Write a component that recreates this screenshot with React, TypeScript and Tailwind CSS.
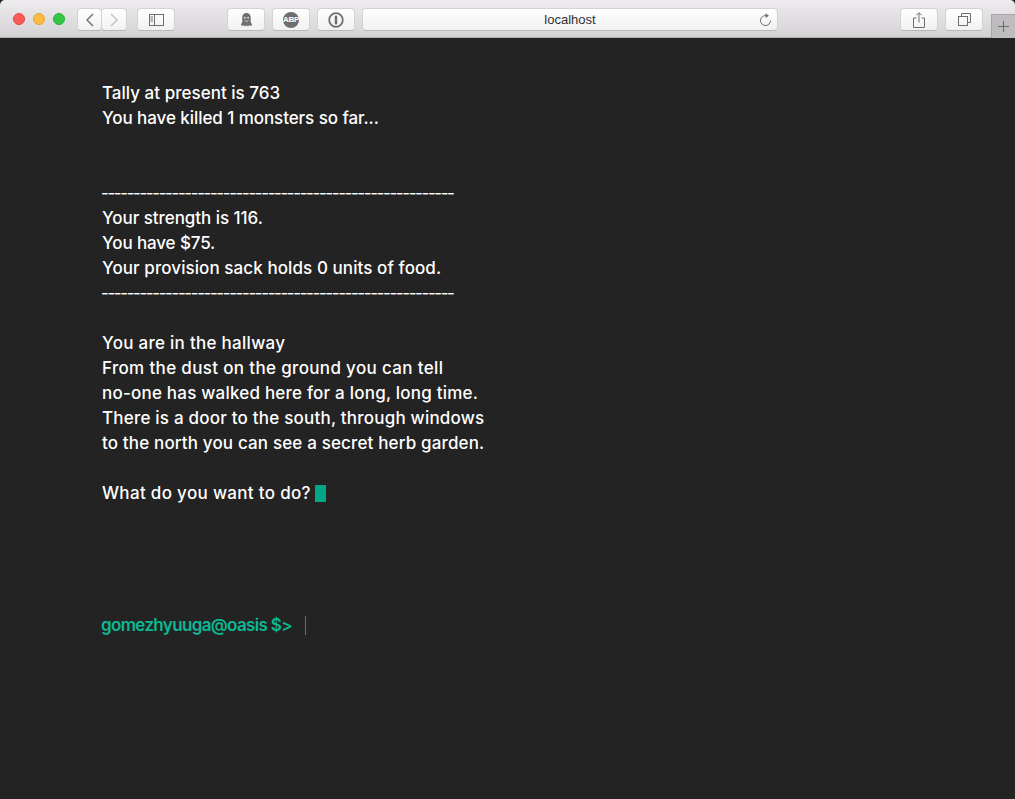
import React from "react";

const Btn = ({ w, children, className = "" }: { w: string; children?: React.ReactNode; className?: string }) => (
  <div className={`${w} h-[23px] flex items-center justify-center rounded-[4px] bg-gradient-to-b from-white to-[#f2f1f2] border border-[#d4d2d4] border-b-[#b9b7b9] ${className}`}>
    {children}
  </div>
);

const Line = ({ children, className = "" }: { children?: React.ReactNode; className?: string }) => (
  <div className={`h-[25px] leading-[25px] whitespace-pre ${className}`}>{children}</div>
);
const dashes = "-".repeat(55);

export default function App() {
  return (
    <div className="w-[1015px] h-[799px] flex flex-col bg-[#232323] overflow-hidden font-['Inter','Liberation_Sans',sans-serif]">
      <header className="h-[38px] shrink-0 flex items-start pt-[8px] bg-gradient-to-b from-[#eeecee] to-[#d4d2d4] border-b border-[#b1afb1] rounded-t-[5px] relative">
        <div className="flex items-center gap-[8px] ml-[13px] mt-[5px]">
          <div className="w-[12px] h-[12px] rounded-full bg-[#fc5b57] border border-[#e5453f]" />
          <div className="w-[12px] h-[12px] rounded-full bg-[#fdbc40] border border-[#e4a32e]" />
          <div className="w-[12px] h-[12px] rounded-full bg-[#33c748] border border-[#27ae3a]" />
        </div>
        <div className="flex ml-[12px]">
          <Btn w="w-[25px]">
            <svg width="10" height="14" viewBox="0 0 10 14" fill="none" stroke="#6e6e6e" strokeWidth="1.4"><path d="M8 1 2 7l6 6" /></svg>
          </Btn>
          <Btn w="w-[26px]" className="-ml-px">
            <svg width="10" height="14" viewBox="0 0 10 14" fill="none" stroke="#c2c2c2" strokeWidth="1.4"><path d="m2 1 6 6-6 6" /></svg>
          </Btn>
        </div>
        <Btn w="w-[38px]" className="ml-[10px]">
          <svg width="15" height="12" viewBox="0 0 15 12" fill="none" stroke="#6e6e6e"><rect x=".5" y=".5" width="14" height="11" /><path d="M5.500 .5v11M1.500 3h2.500M1.500 5h2.500M1.500 7h2.500" /></svg>
        </Btn>
        <Btn w="w-[38px]" className="ml-[52px]">
          <svg width="13" height="14" viewBox="0 0 12 15" fill="#6e6e6e"><path d="M6 0C2.800 0 1.500 2.400 1.500 5v4.500L0 12.500l1.500 1.500L3 13.200 4.500 14.500 6 13.200l1.500 1.300L9 13.200l1.500.8 1.500-1.500-1.500-3V5C10.500 2.400 9.200 0 6 0z" /><circle cx="4.300" cy="5" r=".9" fill="#f5f5f5" /><circle cx="7.700" cy="5" r=".9" fill="#f5f5f5" /><path d="M4 8c1 1 3 1 4 0" stroke="#f5f5f5" fill="none" strokeWidth=".8" /></svg>
        </Btn>
        <Btn w="w-[38px]" className="ml-[7px]">
          <div className="w-[16px] h-[16px] rounded-full bg-[#6e6e6e] flex items-center justify-center text-[8px] tracking-[-0.3px] font-bold text-white font-['Liberation_Sans',sans-serif]">ABP</div>
        </Btn>
        <Btn w="w-[38px]" className="ml-[7px]">
          <svg width="16" height="16" viewBox="0 0 16 16" fill="none"><circle cx="8" cy="8" r="6.800" stroke="#6e6e6e" strokeWidth="1.800" /><rect x="6.800" y="3.500" width="2.400" height="9" rx="1" fill="#6e6e6e" /></svg>
        </Btn>
        <Btn w="w-[416px]" className="ml-[7px] relative text-[13px] text-[#303030] font-['Liberation_Sans',sans-serif]">
          <span>localhost</span>
          <svg className="absolute right-[5px] top-[4px]" width="13" height="14" viewBox="0 0 13 14" fill="none" stroke="#6e6e6e"><path d="M7.500 2.600A5 5 0 1 0 11.500 7.500" /><path d="M6.500 .3 10 2.700 6.500 5z" fill="#6e6e6e" stroke="none" /></svg>
        </Btn>
        <Btn w="w-[38px]" className="ml-[122px]">
          <svg width="12" height="16" viewBox="0 0 12 16" fill="none" stroke="#6e6e6e"><path d="M3.500 6H.5v9.500h11V6h-3M6 10.500V1M3.500 3.200 6 .7l2.500 2.500" /></svg>
        </Btn>
        <Btn w="w-[38px]" className="ml-[7px]">
          <svg width="13" height="13" viewBox="0 0 13 13" fill="none" stroke="#6e6e6e"><rect x=".5" y="3.500" width="9" height="9" /><path d="M3.500 3.500v-3h9v9h-3" /></svg>
        </Btn>
        <div className="absolute right-0 bottom-[-1px] w-[24px] h-[24px] bg-[#bebcbe] border-l border-t border-[#a8a6a8] flex items-center justify-center">
          <svg width="11" height="11" viewBox="0 0 11 11" stroke="#6a6a6a"><path d="M5.500 0v11M0 5.500h11" /></svg>
        </div>
      </header>
      <main className="pl-[102px] pt-[43px] text-white text-[17px] font-medium">
        <Line className="tracking-[0.02px]">Tally at present is 763</Line>
        <Line className="tracking-[-0.07px]">You have killed 1 monsters so far...</Line>
        <Line />
        <Line />
        <Line className="tracking-[-1.41px] font-normal -ml-px">{dashes}</Line>
        <Line className="tracking-[-0.05px]">Your strength is 116.</Line>
        <Line className="tracking-[-0.12px]">You have $75.</Line>
        <Line className="tracking-[0.08px]">Your provision sack holds 0 units of food.</Line>
        <Line className="tracking-[-1.41px] font-normal -ml-px">{dashes}</Line>
        <Line />
        <Line className="tracking-[0.28px]">You are in the hallway</Line>
        <Line className="tracking-[0.34px]">From the dust on the ground you can tell</Line>
        <Line className="tracking-[0.21px]">no-one has walked here for a long, long time.</Line>
        <Line className="tracking-[0.21px]">There is a door to the south, through windows</Line>
        <Line className="tracking-[0.15px]">to the north you can see a secret herb garden.</Line>
        <Line />
        <div className="h-[25px] flex items-center">
          <span className="whitespace-pre leading-[25px] tracking-[0.32px]">What do you want to do?</span>
          <span className="w-[11px] h-[17px] ml-[4px] bg-[#00a685]" />
        </div>
        <div className="mt-[107px] -ml-px h-[25px] flex items-center text-[#0bb894] font-semibold">
          <span className="leading-[25px] whitespace-pre tracking-[-0.66px]">gomezhyuuga@oasis $&gt;</span>
          <span className="w-px h-[19px] ml-[13px] bg-[#0a9a7e]" />
        </div>
      </main>
    </div>
  );
}
